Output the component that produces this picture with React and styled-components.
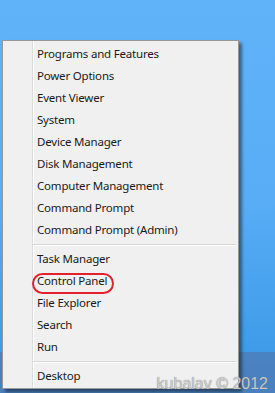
import React from "react";
import styled, { createGlobalStyle } from "styled-components";

const groups = [
  [
    "Programs and Features",
    "Power Options",
    "Event Viewer",
    "System",
    "Device Manager",
    "Disk Management",
    "Computer Management",
    "Command Prompt",
    "Command Prompt (Admin)",
  ],
  ["Task Manager", "Control Panel", "File Explorer", "Search", "Run"],
  ["Desktop"],
];

const App = () => {
  return (
    <>
      <GlobalStyle />
      <Desktop>
        <Menu>
          {groups.map((group, gi) => (
            <React.Fragment key={gi}>
              {gi > 0 && <Separator />}
              {group.map((label) => (
                <Item key={label}>
                  <Label $circled={label === "Control Panel"}>{label}</Label>
                </Item>
              ))}
            </React.Fragment>
          ))}
        </Menu>
        <Watermark>kubalav © 2012</Watermark>
      </Desktop>
    </>
  );
};

const GlobalStyle = createGlobalStyle`
  html, body {
    margin: 0;
    padding: 0;
    overflow: hidden;
  }
  #root {
    width: 275px;
    height: 393px;
  }
`;

const Desktop = styled.div`
  position: relative;
  width: 275px;
  height: 393px;
  box-sizing: border-box;
  padding: 40px 0 0 2px;
  overflow: hidden;
  background: linear-gradient(
      to bottom,
      transparent 352px,
      #4a83c3 352px,
      #4a80be 393px
    ),
    linear-gradient(to bottom, #60b3f9 0px, #58adf6 200px, #3f9be8 352px);
`;

const Menu = styled.div`
  width: 237px;
  box-sizing: border-box;
  border: 1px solid #979797;
  padding: 1px 0 2px;
  background-color: #f0f0f0;
  background-image: linear-gradient(
    to right,
    transparent 29px,
    #dcdcdc 29px,
    #dcdcdc 30px,
    #ffffff 30px,
    #ffffff 31px,
    transparent 31px
  );
  box-shadow: 3px 3px 3px rgba(0, 0, 0, 0.45);
  font-family: "Noto Sans", "DejaVu Sans", sans-serif;
  font-size: 11.5px;
  letter-spacing: -0.2px;
  color: #1a1a1a;
`;

const Item = styled.div`
  height: 22px;
  line-height: 23px;
  padding-left: 34px;
  white-space: nowrap;
`;

const Label = styled.span`
  position: relative;

  &::after {
    content: "";
    display: ${(p) => (p.$circled ? "block" : "none")};
    position: absolute;
    left: -5px;
    right: -7px;
    top: 0px;
    height: 21px;
    box-sizing: border-box;
    border: 2px solid #e4202c;
    border-radius: 11px;
  }
`;

const Separator = styled.div`
  height: 7px;
  margin: 0 2px 0 30px;
  background: linear-gradient(
    to bottom,
    transparent 4px,
    #d7d7d7 4px,
    #d7d7d7 5px,
    #ffffff 5px,
    #ffffff 6px,
    transparent 6px
  );
`;

const Watermark = styled.div`
  position: absolute;
  right: 7px;
  bottom: 1px;
  font-family: "Liberation Sans", Arial, sans-serif;
  font-size: 16px;
  line-height: 16px;
  color: rgba(218, 218, 218, 0.85);
  text-shadow: 0 0 1px #6a6a6a;
`;

export default App;
